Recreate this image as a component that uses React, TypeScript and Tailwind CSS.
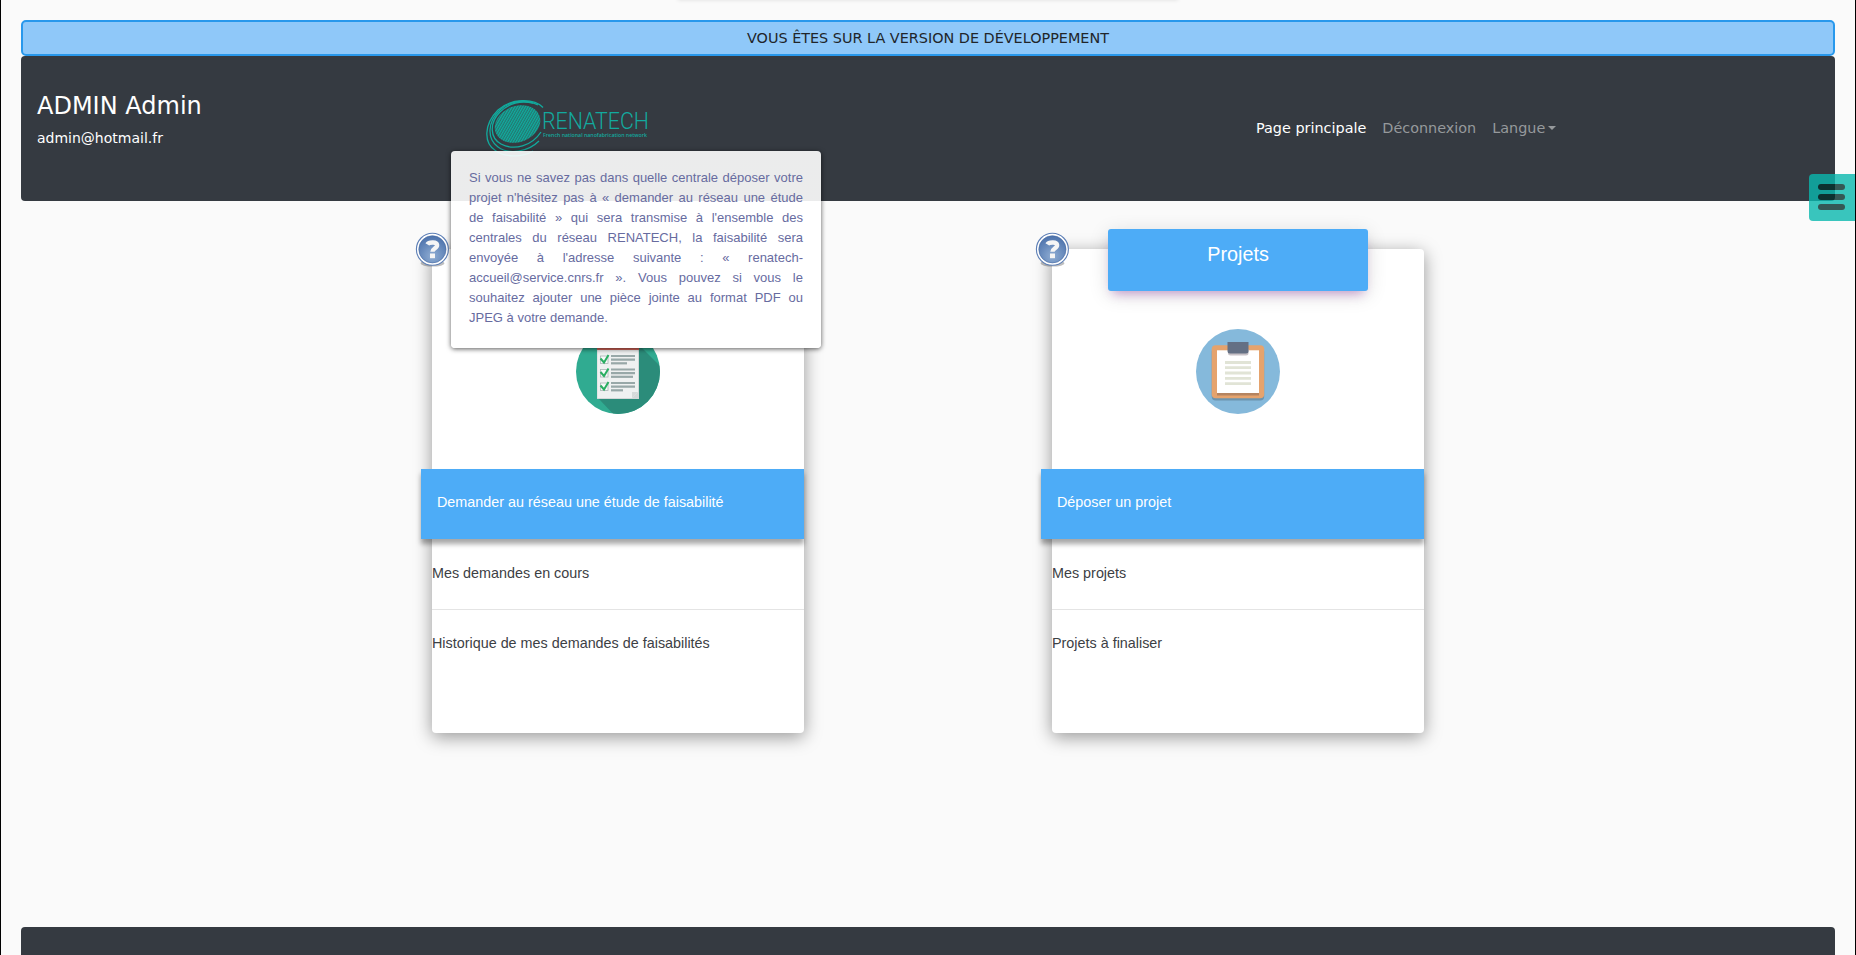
import React from "react";

function HelpBadge() {
  return (
    <svg className="absolute -left-[17px] -top-[17px] z-10" width="36" height="38" viewBox="0 0 36 38">
      <defs>
        <radialGradient id="helpFill" cx="50%" cy="75%" r="75%">
          <stop offset="0" stopColor="#8fadd3" />
          <stop offset="1" stopColor="#4b71ab" />
        </radialGradient>
      </defs>
      <ellipse cx="17.500" cy="31.300" rx="12" ry="3.300" fill="#000" opacity=".25" />
      <circle cx="17.400" cy="17.300" r="16" fill="#fff" stroke="#5d7fb6" strokeWidth="1.100" />
      <circle cx="17.400" cy="17.300" r="13.600" fill="url(#helpFill)" stroke="#456aa3" strokeWidth=".6" />
      <path d="M12.300 12.300C13.500 10.400 21.600 9 22.100 13C22.400 16.200 17.500 16.200 17.500 19.800" fill="none" stroke="#f5f5f5" strokeWidth="4.400" />
      <rect x="15" y="21.500" width="5" height="4.700" fill="#f5f5f5" />
    </svg>
  );
}

function ChecklistIcon() {
  return (
    <svg width="84" height="85" viewBox="0 0 84 85">
      <defs>
        <clipPath id="disc"><ellipse cx="42" cy="42.500" rx="42" ry="42.500" /></clipPath>
      </defs>
      <g clipPath="url(#disc)">
        <rect width="84" height="85" fill="#30ab91" />
        <path d="M62 15L90 43V90H42L22 69Z" fill="#2b8c7a" />
      </g>
      <rect x="21" y="15" width="42" height="55" fill="#d3d8d8" />
      <path d="M21.500 20H62V63L56 69H21.500Z" fill="#eff1f1" />
      <path d="M56 69V63H62Z" fill="#d5dada" />
      <rect x="21" y="13" width="42" height="8" fill="#d8665c" />
      {[27, 40.500, 54].map((y) => (
        <g key={y}>
          <rect x="24.500" y={y} width="7.500" height="7.500" fill="#f7f9f9" stroke="#aab5b5" strokeWidth=".8" />
          <path d={`M24.500 ${y + 2.500}L28 ${y + 6.500}L32.500 ${y - 1}`} fill="none" stroke="#2aae62" strokeWidth="2" />
          <path d={`M35 ${y}H59M35 ${y + 3.700}H59`} stroke="#98a8a8" strokeWidth="2.200" />
          <path d={`M35 ${y + 7.300}H${y === 27 ? 51 : y === 54 ? 47 : 57}`} stroke="#98a8a8" strokeWidth="2.200" />
        </g>
      ))}
    </svg>
  );
}

function ClipboardIcon() {
  return (
    <svg width="84" height="85" viewBox="0 0 84 85">
      <ellipse cx="42" cy="42.500" rx="42" ry="42.500" fill="#85b9db" />
      <rect x="15.700" y="19" width="52.500" height="52.500" rx="4" fill="#6c94ae" />
      <rect x="15.700" y="16.300" width="52.500" height="53" rx="4" fill="#e5a36d" />
      <rect x="21" y="62" width="42" height="4.500" fill="#b58460" />
      <rect x="21" y="21.300" width="42" height="42.700" fill="#fff" />
      <path d="M32 20H52.500V24Q52.500 26.500 50 26.500H34.500Q32 26.500 32 24Z" fill="#c8c2c7" />
      <path d="M31.500 13H52.500V22Q52.500 24.500 50 24.500H34Q31.500 24.500 31.500 22Z" fill="#647084" />
      <path d="M29 33.500H55M29 38.700H55M29 44H55M29 49.400H55M29 54.700H55" stroke="#e1e4d6" strokeWidth="2.800" />
    </svg>
  );
}

function Logo() {
  return (
    <svg width="166" height="62" viewBox="0 0 166 62">
      <defs>
        <pattern id="weave" width="2.300" height="2.300" patternUnits="userSpaceOnUse" patternTransform="rotate(-38)">
          <rect width="2.300" height="2.300" fill="#257570" />
          <rect width="2.300" height="1.150" fill="#0fae9f" />
        </pattern>
      </defs>
      <ellipse cx="31.500" cy="25" rx="23.500" ry="18" fill="url(#weave)" transform="rotate(-22 31.500 25)" />
      <g fill="none" stroke="#12aa9d" strokeWidth="1.300">
        <path d="M57 8.500C48 -1 25 -1 12 11C-2 25 -3 44 10 52C18 58 36 59 47 52" />
        <path d="M52 6C40 0 25 1 14 11C1 23 1 40 12 48C23 56 42 53 53 42" />
        <path d="M47 4C35 1.500 23 4 14 13C3 24 4 39 15 45C28 52 46 47 55 33" />
      </g>
      <text x="56" y="30" fill="#13a99e" fontFamily="Roboto, sans-serif" fontWeight="300" fontSize="23.500" textLength="107" lengthAdjust="spacingAndGlyphs">RENATECH</text>
      <text x="57" y="38" fill="#13a99e" fontFamily="Open Sans, sans-serif" fontWeight="600" fontSize="5.500" textLength="104" lengthAdjust="spacingAndGlyphs">French national nanofabrication network</text>
    </svg>
  );
}

type CardProps = { title?: string; icon: React.ReactNode; items: string[]; children?: React.ReactNode };

function Card({ title, icon, items, children }: CardProps) {
  return (
    <section className="relative flex h-[484px] w-[372px] flex-col rounded bg-white shadow-[0_4px_18px_rgba(0,0,0,0.4)]">
      <HelpBadge />
      <div className="flex h-[220px] flex-col items-center">
        <div className="-mt-5 h-[62px] w-[260px]">
          {title && (
            <h2 className="h-full rounded-[3px] bg-[#4dacf7] pt-[10px] text-center text-[19.800px] leading-[30px] text-white shadow-[0_4px_20px_rgba(0,0,0,0.14),0_7px_10px_-5px_rgba(156,39,176,0.4)]">{title}</h2>
          )}
        </div>
        <div className="mt-[38px]">{icon}</div>
      </div>
      <ul className="text-[14.370px] leading-5 text-[#3c4044]">
        <li className="-ml-[11px] h-[70px] bg-[#4dacf7] pl-4 pt-[23px] text-white shadow-[0_5px_5px_rgba(0,0,0,0.35)]">{items[0]}</li>
        <li className="h-[71px] border-b border-[#e4e4e4] pt-6">{items[1]}</li>
        <li className="pt-[23px]">{items[2]}</li>
      </ul>
      {children}
    </section>
  );
}

export default function App() {
  return (
    <div className="relative flex h-[955px] flex-col overflow-hidden border-x border-black bg-[#fafafa] px-5 pt-5 font-['Liberation_Sans',sans-serif]">
      <div className="absolute left-[677px] top-[-10px] h-[10px] w-[500px] shadow-[0_0_4px_rgba(0,0,0,0.12)]" />
      <div className="flex h-9 shrink-0 items-center justify-center rounded-[5px] border-2 border-[#2898ec] bg-[#8fc8f9] pt-[2px] font-['DejaVu_Sans',sans-serif] text-[14.400px] text-[#212529]">
        VOUS ÊTES SUR LA VERSION DE DÉVELOPPEMENT
      </div>
      <header className="flex h-[145px] shrink-0 rounded bg-[#353a41] font-['DejaVu_Sans',sans-serif] text-[14.400px] text-white">
        <div className="w-[464px] pl-4 pt-[35px]">
          <h1 className="text-[24px] leading-[30px]">ADMIN Admin</h1>
          <p className="mt-[6px] text-[14px] leading-[22px]">admin@hotmail.fr</p>
        </div>
        <div className="w-[771px] pl-px pt-[43px]"><Logo /></div>
        <nav className="flex items-start gap-4 pt-[61px] leading-[22px] text-[#96999c]">
          <a className="text-white">Page principale</a>
          <a>Déconnexion</a>
          <a className="flex items-center">Langue<i className="ml-[3px] border-x-[4px] border-t-[4px] border-x-transparent" /></a>
        </nav>
      </header>
      <main className="flex h-[726px] shrink-0 gap-[248px] pl-[411px] pt-12">
        <Card icon={<ChecklistIcon />} items={["Demander au réseau une étude de faisabilité", "Mes demandes en cours", "Historique de mes demandes de faisabilités"]}>
          <div className="absolute -top-[98px] left-[19px] z-20 h-[197px] w-[370px] rounded bg-[linear-gradient(rgba(255,255,255,0.9)_50px,#fff_50px)] px-[18px] pt-[17px] text-justify text-[13px] leading-5 text-[#676b9f] shadow-[0_1px_5px_rgba(0,0,0,0.65)]">
            Si vous ne savez pas dans quelle centrale déposer votre projet n'hésitez pas à « demander au réseau une étude de faisabilité » qui sera transmise à l'ensemble des centrales du réseau RENATECH, la faisabilité sera envoyée à l'adresse suivante : « renatech-accueil@service.cnrs.fr ». Vous pouvez si vous le souhaitez ajouter une pièce jointe au format PDF ou JPEG à votre demande.
          </div>
        </Card>
        <Card title="Projets" icon={<ClipboardIcon />} items={["Déposer un projet", "Mes projets", "Projets à finaliser"]} />
      </main>
      <footer className="h-12 shrink-0 rounded-t bg-[#353a41]" />
      <button aria-label="Menu" className="absolute right-0 top-[174px] flex h-[47px] w-[46px] flex-col gap-1 rounded-l bg-[#0ab8ae] pl-[9px] pt-[10px] opacity-80">
        <span className="h-[6px] w-[27px] rounded-sm bg-[#042f2d]" />
        <span className="h-[6px] w-[27px] rounded-sm bg-[#042f2d]" />
        <span className="h-[6px] w-[27px] rounded-sm bg-[#042f2d]" />
      </button>
    </div>
  );
}
